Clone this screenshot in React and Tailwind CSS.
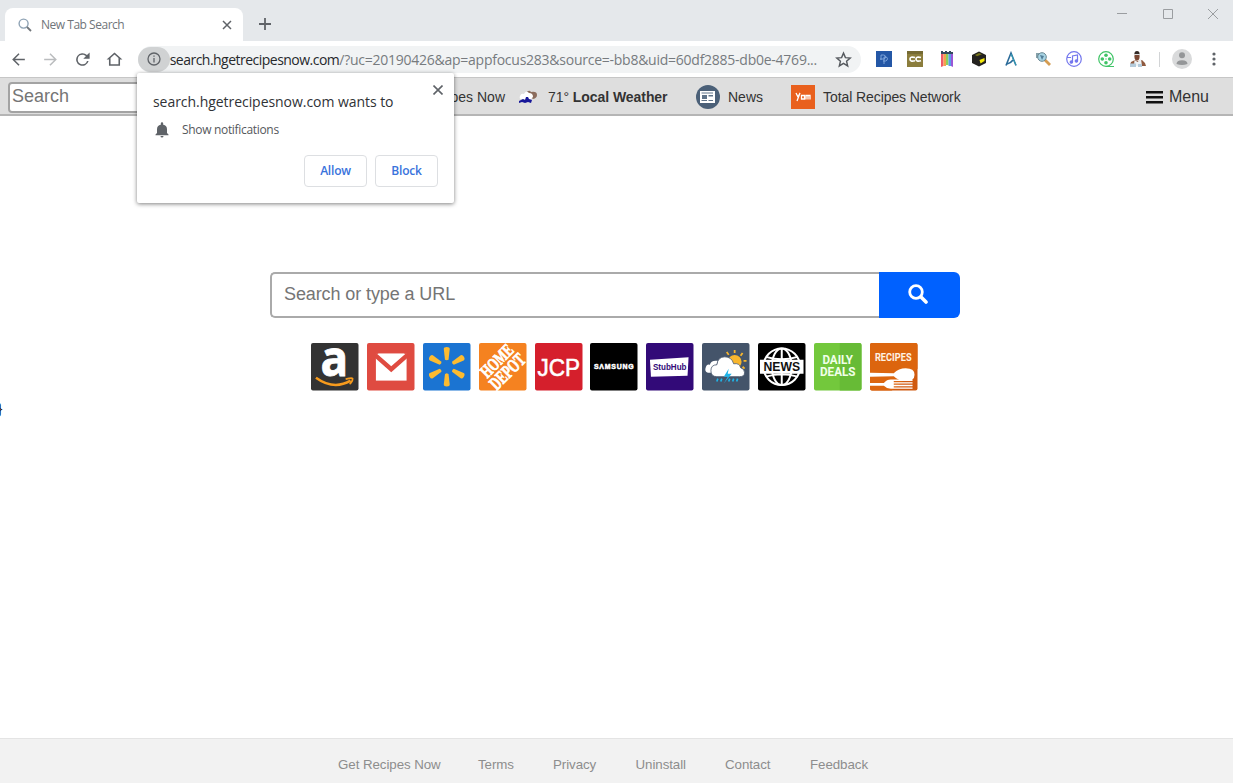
import React from 'react';

const arial = { fontFamily: '"Liberation Sans", Arial, sans-serif' };

const SearchGlyph = ({ className }) => (
  <svg viewBox="0 0 14 14" className={className} fill="none">
    <circle cx="5.6" cy="5.6" r="4.5" stroke="#8fa3b5" strokeWidth="1.4" />
    <path d="M9 9l4 4" stroke="#70757a" strokeWidth="1.8" />
  </svg>
);

const TabStrip = () => (
  <div className="flex h-[41px] bg-[#e5e8eb]">
    <div className="mt-2 ml-[5px] flex h-[33px] w-[238px] items-center rounded-t-lg bg-white pl-[13px]">
      <SearchGlyph className="h-[14px] w-[14px] shrink-0" />
      <span className="ml-[9px] w-[181px] text-[12px] tracking-[-0.48px] text-[#70757a]">New Tab Search</span>
      <svg viewBox="0 0 10 10" className="h-[10px] w-[10px] shrink-0" stroke="#5f6368" strokeWidth="1.5">
        <path d="M1 1l8 8M9 1l-8 8" />
      </svg>
    </div>
    <svg viewBox="0 0 12 12" className="mt-[18px] ml-4 h-3 w-3" stroke="#5f6368" strokeWidth="1.8">
      <path d="M6 0v12M0 6h12" />
    </svg>
    <div className="mt-2 mr-[14px] ml-auto flex h-3 items-center gap-[33.5px]">
      <svg viewBox="0 0 12 12" className="h-3 w-3" stroke="#9a9da0" strokeWidth="1">
        <path d="M1 5.5h10" />
      </svg>
      <svg viewBox="0 0 12 12" className="h-3 w-3" stroke="#9a9da0" strokeWidth="1" fill="none">
        <path d="M1.5 1.5h9v9h-9z" />
      </svg>
      <svg viewBox="0 0 12 12" className="h-3 w-3" stroke="#9a9da0" strokeWidth="1">
        <path d="M1 1l10 10M11 1L1 11" />
      </svg>
    </div>
  </div>
);

const NavButton = ({ d, color = '#5f6368' }) => (
  <svg viewBox="0 0 24 24" className="h-[19px] w-[19px]" fill={color}>
    <path d={d} />
  </svg>
);

const Extensions = () => (
  <div className="flex items-center gap-[15.8px]">
    <svg viewBox="0 0 16 16" className="h-4 w-4" fill="none" stroke="#8fb4e6">
      <path d="M0 0h16v16H0z" fill="#2457a6" stroke="none" />
      <path d="M5 9V4h2.5q2 0 2 2t-2 2H4M8 13V6h1.5q2 0 2 1.7T9.5 10H7" strokeWidth="0.8" />
    </svg>
    <svg viewBox="0 0 16 16" className="h-4 w-4">
      <path d="M0 0h16v16H0z" fill="#8b7d3c" />
      <path d="M0 0h16v3H0z" fill="#756a33" />
      <path d="M8 6.5q-5-1.300-5 1.600t5 1.600M14 6.500Q9 5.200 9 8.100t5 1.600" stroke="#fff" strokeWidth="1.7" fill="none" />
    </svg>
    <svg viewBox="0 0 16 16" className="h-4 w-4">
      <path d="M2 3h2.500v12L2 16z" fill="#ee5a6b" />
      <path d="M4.500 3H7v12H4.500z" fill="#f5a04e" />
      <path d="M7 3h2.500v11H7z" fill="#8bd05d" />
      <path d="M9.500 3H12v12H9.500z" fill="#5a9de8" />
      <path d="M12 3h2v13l-2-1z" fill="#9b55d6" />
      <path d="M2 0h2v1h2V0h2v1h2V0h2v1h2v2H2z" fill="#34495e" />
    </svg>
    <svg viewBox="0 0 16 16" className="h-4 w-4">
      <path d="M8 .5l7 3.500v8l-7 3.500L1 12V4z" fill="#24221f" />
      <path d="M4 4l4-2 3 1.300-5 2z" fill="#77751c" />
      <path d="M8.500 9l5-2v3l-4 2.500z" fill="#f4e90a" />
    </svg>
    <svg viewBox="0 0 16 16" className="h-4 w-4" fill="none" stroke="#2b6b99" strokeWidth="1.600">
      <path d="M3 14.500L8 2l5 12.500M4 13q4-1 6-4" />
      <path d="M8 3l5 11" stroke="#32a2b6" strokeWidth="1" />
    </svg>
    <svg viewBox="0 0 16 16" className="h-4 w-4">
      <path d="M9 8l6 6" stroke="#d49c52" strokeWidth="2.800" />
      <path d="M1 2h6v5H1z" fill="#86a1aa" />
      <circle cx="7" cy="6" r="4.300" fill="#a8d4e4" stroke="#698793" />
      <path d="M5 4l4 1-2 4z" fill="#527e98" />
    </svg>
    <svg viewBox="0 0 16 16" className="h-4 w-4" fill="none" stroke="#7477ed" strokeWidth="1.200">
      <circle cx="8" cy="8" r="7.300" />
      <path d="M1 6.500h4M6.500 11V5l5-1v6" />
      <circle cx="5.400" cy="11" r="1.200" fill="#7477ed" />
      <circle cx="10.400" cy="10" r="1.200" fill="#7477ed" />
    </svg>
    <svg viewBox="0 0 16 16" className="h-4 w-4" fill="#3fc466">
      <circle cx="8" cy="8" r="7.300" fill="none" stroke="#3fc466" strokeWidth="1.200" />
      <circle cx="8" cy="4.300" r="1.800" />
      <circle cx="4.300" cy="8" r="1.800" />
      <circle cx="11.700" cy="8" r="1.800" />
      <circle cx="8" cy="11.700" r="1.800" />
      <circle cx="8" cy="8" r=".7" />
      <path d="M8 15h8v1H8z" />
    </svg>
    <svg viewBox="0 0 16 16" className="h-4 w-4">
      <path d="M0 14l1-3 4-2 3 1 4-1 3 3 1 3H0z" fill="#8f5a3f" />
      <path d="M4.500 9l3 2 3.500-3 1 7H4z" fill="#edf2f5" />
      <path d="M0 12.500h6V16H0zM8 13h4v3H8z" fill="#b4cbdb" />
      <ellipse cx="7" cy="5.500" rx="2.600" ry="4" fill="#7b4833" />
      <path d="M4.400 3q0-3 2.600-3t2.600 3z" fill="#332925" />
      <path d="M4.400 3h5.200v1H4.400z" fill="#ddd" />
    </svg>
  </div>
);

const AddressRow = () => (
  <div className="flex h-9 items-center bg-white pl-[9px]">
    <div className="flex gap-[12.900px]">
      <NavButton d="M20 11.100H7.600l5.700-5.700L12 4l-8 8 8 8 1.400-1.400-5.800-5.700H20z" />
      <NavButton color="#babcbe" d="M4 11.100h12.400l-5.700-5.700L12 4l8 8-8 8-1.400-1.400 5.800-5.700H4z" />
      <NavButton d="M17.650 6.350A8 8 0 1 0 19.730 14h-2.080A6 6 0 1 1 12 6c1.660 0 3.140.69 4.220 1.780L13 11h8V3z" />
      <NavButton d="M12 3L2 12h3v8h14v-8h3zm5 15H7v-7.800l5-4.500 5 4.500z" />
    </div>
    <div className="ml-[14px] flex h-[27px] w-[723px] items-center rounded-full bg-[#f1f3f4]">
      <div className="flex h-[25px] w-8 items-center justify-center rounded-full bg-[#d0d2d3]">
        <svg viewBox="0 0 14 14" className="h-[14px] w-[14px]" fill="none" stroke="#5f6368" strokeWidth="1.300">
          <circle cx="7" cy="7" r="6" />
          <path d="M7 6v4.500M7 3.500v1.300" />
        </svg>
      </div>
      <span className="w-[665px] whitespace-nowrap text-[14px] tracking-[-0.250px] text-[#777b7f]">
        <span className="tracking-[-0.520px] text-[#27292c]">search.hgetrecipesnow.com</span>
        /?uc=20190426&amp;ap=appfocus283&amp;source=-bb8&amp;uid=60df2885-db0e-4769...
      </span>
      <svg viewBox="0 0 24 24" className="h-[17px] w-[17px] shrink-0" fill="none" stroke="#55595e" strokeWidth="2">
        <path d="M12 3l2.700 6.300 6.800.6-5.200 4.500 1.600 6.700-5.900-3.600-5.900 3.600 1.600-6.700-5.200-4.500 6.800-.6z" />
      </svg>
    </div>
    <div className="ml-[15px]">
      <Extensions />
    </div>
    <div className="ml-[13px] h-[15px] w-px bg-[#d2d4d6]" />
    <svg viewBox="0 0 20 20" className="ml-[12px] h-5 w-5">
      <circle cx="10" cy="10" r="10" fill="#d9dadb" />
      <circle cx="10" cy="6.300" r="3" fill="#949698" />
      <path d="M4.500 15q0-3.800 5.500-3.800t5.500 3.800q-5.500 2-11 0z" fill="#949698" />
    </svg>
    <svg viewBox="0 0 4 16" className="ml-[20px] h-4 w-1" fill="#5f6368">
      <circle cx="2" cy="3" r="1.600" />
      <circle cx="2" cy="8" r="1.600" />
      <circle cx="2" cy="13" r="1.600" />
    </svg>
  </div>
);

const RecipeBar = () => (
  <div className="flex h-[39px] items-center border-t border-b-2 border-t-[#c6c6c6] border-b-[#b5b5b5] bg-[#dedede] pt-[2px] text-[14px] text-[#333]" style={arial}>
    <div className="ml-[8px] flex h-[31px] w-[300px] shrink-0 items-center rounded-[4px] border-2 border-[#a3a3a3] bg-white pb-[1px] pl-[2px] text-[18px] text-[#757575]">
      Search
    </div>
    <span className="ml-[87px] w-[110px] text-right whitespace-nowrap">Get Recipes Now</span>
    <svg viewBox="0 0 18 14" className="ml-[14px] h-[14px] w-[18px]">
      <path d="M7 3q3-4 5-1 6-1 6 3 0 3-4 4z" fill="#8c6d5d" />
      <path d="M1 6q1-3 4-2 2-4 5-1 4 0 4 4l-2 2H2Q0 9 1 6z" fill="#fff" />
      <path d="M4 9l2 1 1-3h2l1 2 3 1-1 3-3-1-3 1-3-1-3 1V11z" fill="#171799" />
    </svg>
    <span className="ml-[11px] w-[120px] whitespace-nowrap tracking-[-0.060px]">
      71° <b>Local Weather</b>
    </span>
    <svg viewBox="0 0 24 24" className="ml-[28px] h-6 w-6">
      <circle cx="12" cy="12" r="12" fill="#4b6078" />
      <path d="M4 6h15v12H4z" fill="#fff" />
      <path d="M5.500 8H17M5.500 15.500H11M12.500 15.500H17" stroke="#60748a" />
      <path d="M6 10h5v4H6zM12.500 10H17v1.500h-4.500z" fill="#60748a" />
    </svg>
    <span className="ml-[8px] w-[35px]">News</span>
    <svg viewBox="0 0 24 24" className="ml-[28px] h-6 w-6" fill="none" stroke="#fff">
      <path d="M0 0h24v24H0z" fill="#e9601d" stroke="none" />
      <path d="M5 8l2 4 2-4-3 8M10.500 10.500h3v3.500h-3zM15 14.500V10.500h2v4M17 10.500h2v4" strokeWidth="1.300" />
    </svg>
    <span className="ml-[8px] whitespace-nowrap tracking-[-0.080px]">Total Recipes Network</span>
    <div className="mr-[24px] ml-auto flex items-center gap-[6px] text-[16px]">
      <svg viewBox="0 0 17 13" className="h-[13px] w-[17px]" fill="#111">
        <path d="M0 0h17v2.500H0zM0 5h17v2.500H0zM0 10h17v2.500H0z" />
      </svg>
      Menu
    </div>
  </div>
);

const PermissionPopup = () => (
  <div className="absolute top-[73px] left-[137px] h-[130px] w-[317px] rounded-[2px] bg-white px-4 pt-[19px] shadow-[0_1px_4px_rgba(0,0,0,0.5)]">
    <svg viewBox="0 0 10 10" className="absolute top-[12px] right-[11px] h-[10px] w-[10px]" stroke="#5f6368" strokeWidth="1.600">
      <path d="M.5.5l9 9M9.500.5l-9 9" />
    </svg>
    <div className="h-[19px] whitespace-nowrap text-[14px] leading-[19px] tracking-[-0.050px] text-[#303236]">
      search.hgetrecipesnow.com wants to
    </div>
    <div className="mt-[10px] flex h-[18px] items-center">
      <svg viewBox="0 0 16 16" className="ml-px h-4 w-4" fill="#5f6368">
        <path d="M8 15.500q1.500 0 1.500-1.500h-3q0 1.500 1.500 1.500zM13 11V7.300q0-3.700-3.800-4.500V1.500a1.200 1.200 0 0 0-2.400 0v1.300Q3 3.600 3 7.300V11l-1.500 1.500v.7h13v-.7z" />
      </svg>
      <span className="ml-[12px] text-[12px] tracking-[-0.320px] text-[#55585c]">Show notifications</span>
    </div>
    <div className="mt-[16px] flex justify-end gap-[8px] text-[12px] font-semibold tracking-[-0.200px] text-[#3973dc]">
      <button className="h-8 w-[63px] rounded-[4px] border border-[#dddfe2]">Allow</button>
      <button className="h-8 w-[63px] rounded-[4px] border border-[#dddfe2]">Block</button>
    </div>
  </div>
);

const rays = [0, 60, 120, 180, 240, 300];

const tiles = [
  {
    name: 'Amazon',
    bg: '#333333',
    art: (
      <>
        <text x="23.500" y="33" textAnchor="middle" fontFamily="Open Sans" fontWeight="700" fontSize="50" fill="#fff" stroke="#fff" strokeWidth=".8" textLength="28" lengthAdjust="spacingAndGlyphs">a</text>
        <path d="M5 35q18 13 35 3" stroke="#f79b1d" strokeWidth="2.500" fill="none" />
        <path d="M35 36.500q8-2 7 0 0 3-3 5" stroke="#f79b1d" strokeWidth="1.700" fill="none" />
      </>
    ),
  },
  {
    name: 'Gmail',
    bg: '#df4b41',
    art: (
      <>
        <path d="M9 11h31v27H9z" fill="#fff" />
        <path d="M8 12l16.500 14.500L41 12" stroke="#df4b41" strokeWidth="4.500" fill="none" />
        <path d="M11 10.500h27L24.500 22.500z" fill="#fff" />
      </>
    ),
  },
  {
    name: 'Walmart',
    bg: '#1b74d2',
    art: rays.map((a) => (
      <path key={a} d="M24 17.500l-1.800-.7L21 6q0-2 3-2t3 2l-1.200 10.800z" fill="#fdbb30" transform={`rotate(${a} 24 24)`} />
    )),
  },
  {
    name: 'Home Depot',
    bg: '#f58220',
    art: (
      <g fill="#fff" stroke="#fff" strokeWidth=".8" fontFamily="Liberation Serif" fontWeight="700" transform="rotate(-45 24 24)">
        <text x="24" y="21.500" textAnchor="middle" fontSize="18" textLength="39" lengthAdjust="spacingAndGlyphs">HOME</text>
        <text x="24" y="37" textAnchor="middle" fontSize="19" textLength="43" lengthAdjust="spacingAndGlyphs">DEPOT</text>
      </g>
    ),
  },
  {
    name: 'JCP',
    bg: '#d51f2c',
    art: <text x="24" y="33" textAnchor="middle" fontFamily="Liberation Sans" fontSize="25" fill="#fff" stroke="#fff" strokeWidth=".6" textLength="43" lengthAdjust="spacingAndGlyphs">JCP</text>,
  },
  {
    name: 'Samsung',
    bg: '#000000',
    art: <text x="24" y="26.500" textAnchor="middle" fontFamily="Liberation Sans" fontWeight="700" fontSize="7" fill="#fff" stroke="#fff" strokeWidth=".5" textLength="40" lengthAdjust="spacing">SΛMSUNG</text>,
  },
  {
    name: 'StubHub',
    bg: '#320a78',
    art: (
      <>
        <path d="M4 17l39-2.500-1 18.500-37 1z" fill="#fff" />
        <text x="24" y="27.500" textAnchor="middle" fontFamily="Liberation Sans" fontWeight="700" fontSize="8.500" fill="#320a78" textLength="34" lengthAdjust="spacingAndGlyphs">StubHub</text>
      </>
    ),
  },
  {
    name: 'Weather',
    bg: '#44546a',
    art: (
      <>
        <circle cx="33" cy="19" r="7" fill="#f8b62d" />
        <path d="M33 7v3M25 9l2 3M41 10l-2 3M45 18h-3M43 26l-2-2" stroke="#f8b62d" strokeWidth="1.800" />
        <path d="M6 30q-4-1-2-6 1-3 4-2 1-5 8-4l-4 12z" fill="#fff" />
        <path d="M15 34q-6 0-6-6t6-6q1-8 8-8t9 7q6-1 7 4 4 1 4 5t-5 4z" fill="#fff" stroke="#44546a" strokeWidth=".8" />
        <path d="M27 26l-5 8h4l-4 7 8-10h-4z" fill="#20b4e8" />
        <path d="M16 36l-1 3M20 36l-1 3M28 36l-1 3M32 36l-1 3M36 36l-1 3" stroke="#20b4e8" strokeWidth="1.700" />
      </>
    ),
  },
  {
    name: 'News',
    bg: '#000000',
    art: (
      <>
        <g fill="none" stroke="#fff" strokeWidth="2">
          <circle cx="24" cy="24" r="18.500" />
          <ellipse cx="24" cy="24" rx="10" ry="18.500" />
          <path d="M24 5v38M8 14q16 5 32 0M8 34q16-5 32 0" />
        </g>
        <path d="M2 17h44v14H2z" fill="#fff" />
        <text x="24" y="28.700" textAnchor="middle" fontFamily="Liberation Sans" fontWeight="700" fontSize="13" fill="#111" textLength="37" lengthAdjust="spacingAndGlyphs">NEWS</text>
      </>
    ),
  },
  {
    name: 'Daily Deals',
    bg: '#73c83c',
    art: (
      <>
        <path d="M26 0h20a2 2 0 0 1 2 2v44a2 2 0 0 1-2 2H26z" fill="#67bb36" />
        <g fill="#f0ffe8" fontFamily="Roboto" fontWeight="700" fontSize="12">
          <text x="24" y="21.500" textAnchor="middle" textLength="31" lengthAdjust="spacingAndGlyphs">DAILY</text>
          <text x="24" y="33.500" textAnchor="middle" textLength="36" lengthAdjust="spacingAndGlyphs">DEALS</text>
        </g>
      </>
    ),
  },
  {
    name: 'Recipes',
    bg: '#d05a10',
    art: (
      <>
        <path d="M2 0h44a2 2 0 0 1 2 2v24L22 48H2a2 2 0 0 1-2-2V2a2 2 0 0 1 2-2z" fill="#dc650e" />
        <text x="23.500" y="18.500" textAnchor="middle" fontFamily="Roboto" fontWeight="700" fontSize="10.500" fill="#fff1e4" textLength="37" lengthAdjust="spacingAndGlyphs">RECIPES</text>
        <path d="M0 30l24 .5q5-5 12-5 9 0 9 6.500T36 38.500q-7 0-12-5L0 34z" fill="#fff" />
        <path d="M0 40.500h14q3-3.500 7-3.500h22v1.300H24v1.400h19V41H24v1.300h19v1.300H24v1.300h19v1.300H21q-4 0-7-3.100H0z" fill="#fff" />
      </>
    ),
  },
];

const SearchArea = () => (
  <main className="flex grow flex-col pt-[156px]" style={arial}>
    <div className="ml-[270px] flex h-[46px] w-[690px]">
      <div className="flex grow items-center rounded-l-[5px] border-2 border-r-0 border-[#aaa] pb-px pl-[12px] text-[18px] tracking-[-0.100px] text-[#757575]">
        Search or type a URL
      </div>
      <button className="flex w-[81px] items-center justify-center rounded-r-[6px] bg-[#0061ff] pr-[3px] pb-[3px]">
        <svg viewBox="0 0 20 20" className="h-5 w-5" fill="none" stroke="#fff" strokeLinecap="round">
          <circle cx="8" cy="8" r="6.300" strokeWidth="2.800" />
          <path d="M13 13l5 5" strokeWidth="3.600" />
        </svg>
      </button>
    </div>
    <div className="mt-[25px] ml-[311px] flex gap-[8.400px]">
      {tiles.map((tile) => (
        <svg key={tile.name} viewBox="0 0 48 48" className="h-[47.500px] w-[47.500px] overflow-visible" aria-label={tile.name}>
          <rect width="48" height="48" rx="2" fill={tile.bg} />
          {tile.art}
        </svg>
      ))}
    </div>
    <div className="mt-[10px] -ml-[4px] text-[16px] leading-[18px] text-black" style={{ fontFamily: '"Liberation Serif", serif' }}>{'}'}</div>
  </main>
);

const Footer = () => (
  <footer className="grid h-[45px] grid-cols-[140px_75px_82.5px_89.5px_85px_60px] items-center border-t border-[#e4e4e4] bg-[#f2f2f2] pt-[8px] pl-[338px] text-[13.330px] tracking-[-0.070px] text-[#8d8d8d]" style={arial}>
    {['Get Recipes Now', 'Terms', 'Privacy', 'Uninstall', 'Contact', 'Feedback'].map((link) => (
      <span key={link} className="whitespace-nowrap">{link}</span>
    ))}
  </footer>
);

const App = () => (
  <div className="relative flex h-[783px] w-[1233px] flex-col overflow-hidden bg-white" style={{ fontFamily: '"Open Sans", "Noto Sans", sans-serif' }}>
    <TabStrip />
    <AddressRow />
    <RecipeBar />
    <SearchArea />
    <Footer />
    <PermissionPopup />
  </div>
);

export default App;
